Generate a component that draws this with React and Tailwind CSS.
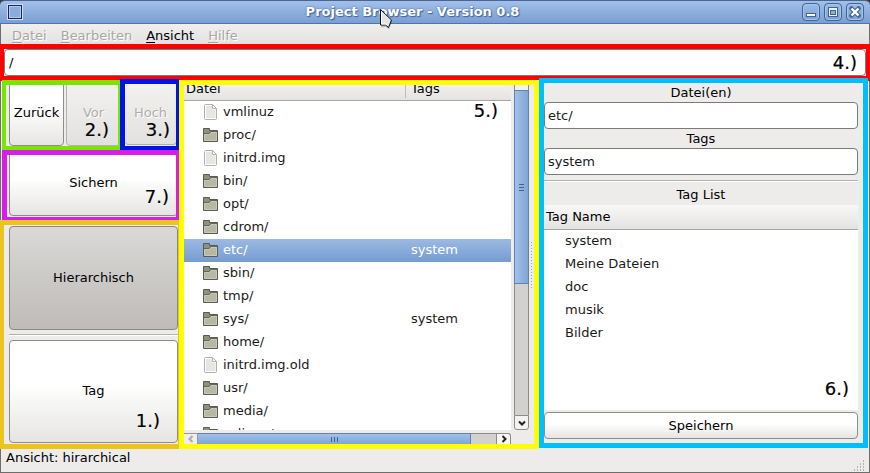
import React from "react";

const files = [
  { name: "vmlinuz", kind: "file" },
  { name: "proc/" },
  { name: "initrd.img", kind: "file" },
  { name: "bin/" },
  { name: "opt/" },
  { name: "cdrom/" },
  { name: "etc/", tags: "system", selected: true },
  { name: "sbin/" },
  { name: "tmp/" },
  { name: "sys/", tags: "system" },
  { name: "home/" },
  { name: "initrd.img.old", kind: "file" },
  { name: "usr/" },
  { name: "media/" },
  { name: "selinux/" },
];

const tagNames = ["system", "Meine Dateien", "doc", "musik", "Bilder"];

const raised =
  "rounded-[4px] border border-[#8f8c88] bg-linear-to-b from-white from-45% via-[#f9f9f8] via-55% to-[#e6e5e3]";
const disabledButton =
  "rounded-[4px] border border-[#b3b1ae] bg-linear-to-b from-[#f3f2f1] to-[#e2e1df] text-[#b0aeab] [text-shadow:1px_1px_0_#fff]";
const thumb = "border-[#5f82b3] from-[#a4c1e8] to-[#7fa5d8]";

function FolderIcon() {
  return (
    <svg width="16" height="16" viewBox="0 0 16 16" className="shrink-0" aria-hidden="true">
      <path d="M.5 14.500V1.500H6.500V3.500H14.500V14.500z" fill="#8f907f" stroke="#5a5b51" />
      <path d="M1.500 13.500V7.500H6.500L8 5.500H13.500V13.500z" fill="#b7b8a4" stroke="#c9cab9" />
      <path d="M1 6.500H6L7.500 4.500H14" fill="none" stroke="#65665a" />
    </svg>
  );
}

function FileIcon() {
  return (
    <svg width="16" height="16" viewBox="0 0 16 16" className="shrink-0" aria-hidden="true">
      <path d="M2.500.5h7l4 4v10a1 1 0 0 1-1 1h-10a1 1 0 0 1-1-1v-13a1 1 0 0 1 1-1z" fill="#fdfdfd" stroke="#b0b1ad" />
      <path d="M3 2h6v3.500h3.500V14H3z" fill="#e6e7e4" />
      <path d="M9.500.5v4h4z" fill="#fff" stroke="#b3b4b0" />
    </svg>
  );
}

function Chevron({ d, stroke = "#222" }) {
  return (
    <svg width="8" height="8" viewBox="0 0 8 8" aria-hidden="true">
      <path d={d} fill="none" stroke={stroke} strokeWidth="2" />
    </svg>
  );
}

function Mark({ children, className }) {
  return (
    <span
      className={`pointer-events-none absolute text-lg leading-5 text-black [-webkit-text-stroke:0.2px_#000] ${className}`}
    >
      {children}
    </span>
  );
}

function WindowButton({ label, children }) {
  return (
    <button
      type="button"
      aria-label={label}
      className="flex size-[18px] items-center justify-center rounded-[4px] border border-[#3f6596] bg-linear-to-b from-[#9dbce6] to-[#7ba1d3] shadow-[inset_0_0_0_1px_#a9c4e8]"
    >
      <svg width="12" height="12" viewBox="0 0 12 12" aria-hidden="true">
        {children}
      </svg>
    </button>
  );
}

function TitleBar() {
  return (
    <header className="relative flex h-6 items-center rounded-t-[5px] border-t border-b border-t-[#4a6590] border-b-[#4f75a8] bg-linear-to-b from-[#a2c0ea] to-[#7a9fd1] pr-[6px] pl-[7px]">
      <svg width="16" height="16" viewBox="0 0 16 16" aria-hidden="true">
        <rect x="1.500" y="1.500" width="13" height="13" fill="none" stroke="#cfdcf3" strokeWidth="3" />
        <rect x="1.500" y="1.500" width="13" height="13" fill="#8bacd9" stroke="#15226b" />
        <rect x="2.500" y="2.500" width="11" height="11" fill="none" stroke="#dfe8f6" strokeDasharray="1 1" />
      </svg>
      <h1 className="flex-1 text-center font-bold text-white [text-shadow:0_0_2px_#3f659b,1px_1px_1px_#3f659b]">
        Project Browser - Version 0.8
      </h1>
      <div className="flex gap-1">
        <WindowButton label="Minimieren">
          <rect x="1.500" y="7.500" width="9" height="3" fill="#fff" stroke="#3f6596" />
        </WindowButton>
        <WindowButton label="Maximieren">
          <rect x="1.500" y="1.500" width="9" height="9" fill="#eef4fc" stroke="#3f6596" />
          <rect x="3.500" y="4.500" width="5" height="4" fill="#8bacd9" stroke="#3f6596" />
        </WindowButton>
        <WindowButton label="Schließen">
          <path d="M2.500 2.500l7 7m0-7l-7 7" stroke="#3f6596" strokeWidth="4.500" strokeLinecap="round" />
          <path d="M2.500 2.500l7 7m0-7l-7 7" stroke="#fff" strokeWidth="2.400" />
        </WindowButton>
      </div>
      <svg
        width="15"
        height="22"
        viewBox="0 0 15 22"
        className="absolute top-[7px] left-[379px]"
        aria-hidden="true"
      >
        <path d="M2 2.500v17l5-.5 3 2.500 3-7.500z" fill="#000" opacity=".2" />
        <path d="M1.500 1.500v15.500l5 0 3 2.500 3-7.500z" fill="#e4e4e2" stroke="#111" strokeLinejoin="round" />
        <path d="M2.500 4v12l4.500 0 2 1.500" fill="none" stroke="#fff" />
      </svg>
    </header>
  );
}

function MenuBar() {
  const items = [
    ["D", "atei", false],
    ["B", "earbeiten", false],
    ["A", "nsicht", true],
    ["H", "ilfe", false],
  ];
  return (
    <nav className="flex h-5 items-end gap-[14px] bg-linear-to-b from-[#f0efee] to-[#e3e2e0] pl-[11px]">
      {items.map(([key, rest, enabled]) => (
        <button
          key={key}
          type="button"
          disabled={!enabled}
          className={enabled ? "leading-4 text-black" : "leading-4 text-[#a9a7a4] [text-shadow:1px_1px_0_#fff]"}
        >
          <span className="underline underline-offset-2">{key}</span>
          {rest}
        </button>
      ))}
    </nav>
  );
}

function Sidebar() {
  return (
    <div className="flex w-[179px] shrink-0 flex-col">
      <div className="flex h-[70px]">
        <div className="relative ml-[2px] flex w-[118px] gap-[2px] overflow-hidden border-t-[5px] border-r-[2px] border-b-[4px] border-l-[4px] border-[#78e600] pl-[3px]">
          <button type="button" className={`-mt-[5px] w-[55px] shrink-0 ${raised}`}>
            Zurück
          </button>
          <button type="button" disabled className={`-mt-[5px] w-[55px] shrink-0 ${disabledButton}`}>
            Vor
          </button>
          <Mark className="right-[9px] bottom-[6px]">2.)</Mark>
        </div>
        <div className="relative -mt-px flex flex-1 overflow-hidden border-[5px] border-r-[3px] border-b-[4px] border-[#0014e6] pb-px">
          <button type="button" disabled className={`-mt-[4px] -mr-px flex-1 border-l-0 ${disabledButton}`}>
            Hoch
          </button>
          <Mark className="right-[6px] bottom-[6px]">3.)</Mark>
        </div>
      </div>
      <div className="relative ml-[2px] flex h-[70px] overflow-hidden border-[5px] border-r-[3px] border-b-[3px] border-[#d81ee6] pb-px pl-[2px]">
        <button type="button" className={`-mt-[5px] -mr-[2px] flex-1 ${raised}`}>
          Sichern
        </button>
        <Mark className="right-[7px] bottom-[10px]">7.)</Mark>
      </div>
      <div className="relative flex flex-1 flex-col border-y-[5px] border-r border-l-[4px] border-[#ebc41e] py-px pl-[5px]">
        <button
          type="button"
          aria-pressed="true"
          className="flex-1 rounded-[4px] border border-[#8a8784] bg-linear-to-b from-[#dad9d7] to-[#bebbb8]"
        >
          Hierarchisch
        </button>
        <hr className="my-1 h-[2px] border-t border-b border-t-[#b5b3b0] border-b-white" />
        <button type="button" className={`flex-1 ${raised}`}>
          Tag
        </button>
        <Mark className="right-[18px] bottom-[13px]">1.)</Mark>
      </div>
    </div>
  );
}

function FileBrowser() {
  return (
    <section className="relative flex min-w-0 grow basis-[360px] overflow-hidden border-[5px] border-[#ffff00] bg-[#edeceb]">
      <div className="flex min-w-0 flex-1 flex-col">
        <div className="h-[345px] overflow-hidden bg-white">
          <table className="-mt-2 w-full table-fixed border-separate border-spacing-0">
            <thead>
              <tr className="h-6 bg-linear-to-b from-[#f8f8f7] to-[#e3e2e0]">
                <th className="w-[222px] border-b border-[#a9a7a4] p-0 pl-[2px] text-left font-normal">
                  <span className="flex h-[19px] items-center border-r border-[#c0bebb]">Datei</span>
                </th>
                <th className="border-b border-[#a9a7a4] p-0 pl-[5px] text-left font-normal">Tags</th>
              </tr>
            </thead>
            <tbody>
              {files.map((file) => (
                <tr
                  key={file.name}
                  aria-selected={!!file.selected}
                  className={
                    file.selected
                      ? "h-[23px] bg-linear-to-b from-[#9bbae4] to-[#759ccf] text-white"
                      : "h-[23px] text-[#1a1a1a]"
                  }
                >
                  <td className="p-0 pb-px pl-[19px]">
                    <span className="flex items-center gap-1">
                      {file.kind === "file" ? <FileIcon /> : <FolderIcon />}
                      {file.name}
                    </span>
                  </td>
                  <td className="p-0 pb-px pl-[5px]">{file.tags}</td>
                </tr>
              ))}
            </tbody>
          </table>
        </div>
        <div className="mt-[3px] flex h-[11px] overflow-hidden">
          <button
            type="button"
            aria-label="Nach links"
            className="flex w-[14px] items-center justify-center border-t border-r border-[#9a9895] bg-[#f0efee]"
          >
            <Chevron d="M5.500 1L2.500 4l3 3" stroke="#aaa" />
          </button>
          <div className="flex flex-1 border-t border-[#8f8c88] bg-[#d3d1cf]">
            <div
              className={`-mt-px flex w-[273px] items-center justify-center gap-[2px] border-t border-r bg-linear-to-b ${thumb}`}
            >
              <i className="h-[5px] w-px bg-[#41628f]" />
              <i className="h-[5px] w-px bg-[#41628f]" />
              <i className="h-[5px] w-px bg-[#41628f]" />
            </div>
          </div>
          <button
            type="button"
            aria-label="Nach rechts"
            className="flex w-[15px] items-center justify-center rounded-tr-[3px] border-x border-t border-[#8f8c88] bg-[#f6f6f5]"
          >
            <Chevron d="M2.500 1l3 3-3 3" />
          </button>
        </div>
      </div>
      <div className="mr-[1px] ml-[3px] flex h-[345px] w-[15px] flex-col">
        <button type="button" aria-label="Nach oben" className="h-[5px] border-x border-[#8f8c88] bg-[#f3f2f1]" />
        <div className="flex-1 border-x border-[#8f8c88] bg-[#d3d1cf]">
          <div
            className={`-mx-px flex h-[194px] flex-col items-center justify-center gap-[2px] border bg-linear-to-r ${thumb}`}
          >
            <i className="h-px w-[5px] bg-[#41628f]" />
            <i className="h-px w-[5px] bg-[#41628f]" />
            <i className="h-px w-[5px] bg-[#41628f]" />
          </div>
        </div>
        <button
          type="button"
          aria-label="Nach unten"
          className="flex h-[15px] items-center justify-center rounded-b-[3px] border border-[#8f8c88] bg-[#f3f2f1]"
        >
          <Chevron d="M1 2.500l3 3 3-3" />
        </button>
      </div>
      <div className="flex w-1 items-center">
        <div className="h-[47px] w-1 bg-[radial-gradient(circle,#a5a3a0_0.8px,transparent_1px)] bg-size-[3px_3px]" />
      </div>
      <Mark className="top-4 right-[36px]">5.)</Mark>
    </section>
  );
}

function TagPanel() {
  const field = "h-[27px] w-full rounded-[4px] border border-[#7d7a77] bg-white pl-[3px] text-[#1a1a1a] outline-none";
  return (
    <section className="relative -mt-[2px] mr-[2px] mb-px flex min-w-0 grow basis-[329px] flex-col border-[5px] border-[#00bfff] pr-[5px]">
      <label htmlFor="datei" className="h-[19px] text-center leading-[19px]">
        Datei(en)
      </label>
      <input id="datei" defaultValue="etc/" className={field} />
      <label htmlFor="tags" className="h-[19px] text-center leading-[19px]">
        Tags
      </label>
      <input id="tags" defaultValue="system" className={field} />
      <hr className="mt-[5px] h-[2px] border-t border-b border-t-[#b5b3b0] border-b-white" />
      <h2 className="h-[23px] pt-[2px] text-center leading-[21px]">Tag List</h2>
      <div className="flex-1 bg-white">
        <table className="w-full border-separate border-spacing-0">
          <thead>
            <tr className="h-[25px] bg-linear-to-b from-[#f8f8f7] to-[#e3e2e0]">
              <th className="border-b border-[#a9a7a4] p-0 pl-[2px] text-left font-normal">Tag Name</th>
            </tr>
          </thead>
          <tbody>
            {tagNames.map((name) => (
              <tr key={name} className="h-[23px] text-[#1a1a1a]">
                <td className="p-0 pb-px pl-[21px]">{name}</td>
              </tr>
            ))}
          </tbody>
        </table>
      </div>
      <button type="button" className={`mt-[2px] mb-1 h-[27px] ${raised}`}>
        Speichern
      </button>
      <Mark className="right-[14px] bottom-[44px]">6.)</Mark>
    </section>
  );
}

export default function App() {
  return (
    <div className="bg-[#3a3f3a] font-['DejaVu_Sans',sans-serif] text-[13px] leading-4 text-black">
      <TitleBar />
      <div className="flex min-h-[449px] flex-col border-x border-b border-[#6f6d6b] bg-[#edeceb]">
        <MenuBar />
        <div className="relative -mx-px border-x-[4px] border-y-[5px] border-[#ff0000]">
          <input
            aria-label="Pfad"
            defaultValue="/"
            className="block h-[27px] w-full rounded-[4px] border border-[#7d7a77] bg-white pl-1 outline-none"
          />
          <Mark className="top-[4px] right-[9px]">4.)</Mark>
        </div>
        <main className="-mx-px -mt-px flex">
          <Sidebar />
          <FileBrowser />
          <TagPanel />
        </main>
        <footer className="flex flex-1 items-start justify-between pt-px pr-1 pl-[5px]">
          Ansicht: hirarchical
          <svg width="12" height="12" viewBox="0 0 12 12" className="self-end" aria-hidden="true">
            <path
              d="M1 10h1M4 10h1M7 10h1M10 10h1M4 7h1M7 7h1M10 7h1M7 4h1M10 4h1M10 1h1"
              stroke="#a3a19e"
              strokeWidth="1.500"
            />
          </svg>
        </footer>
      </div>
    </div>
  );
}
